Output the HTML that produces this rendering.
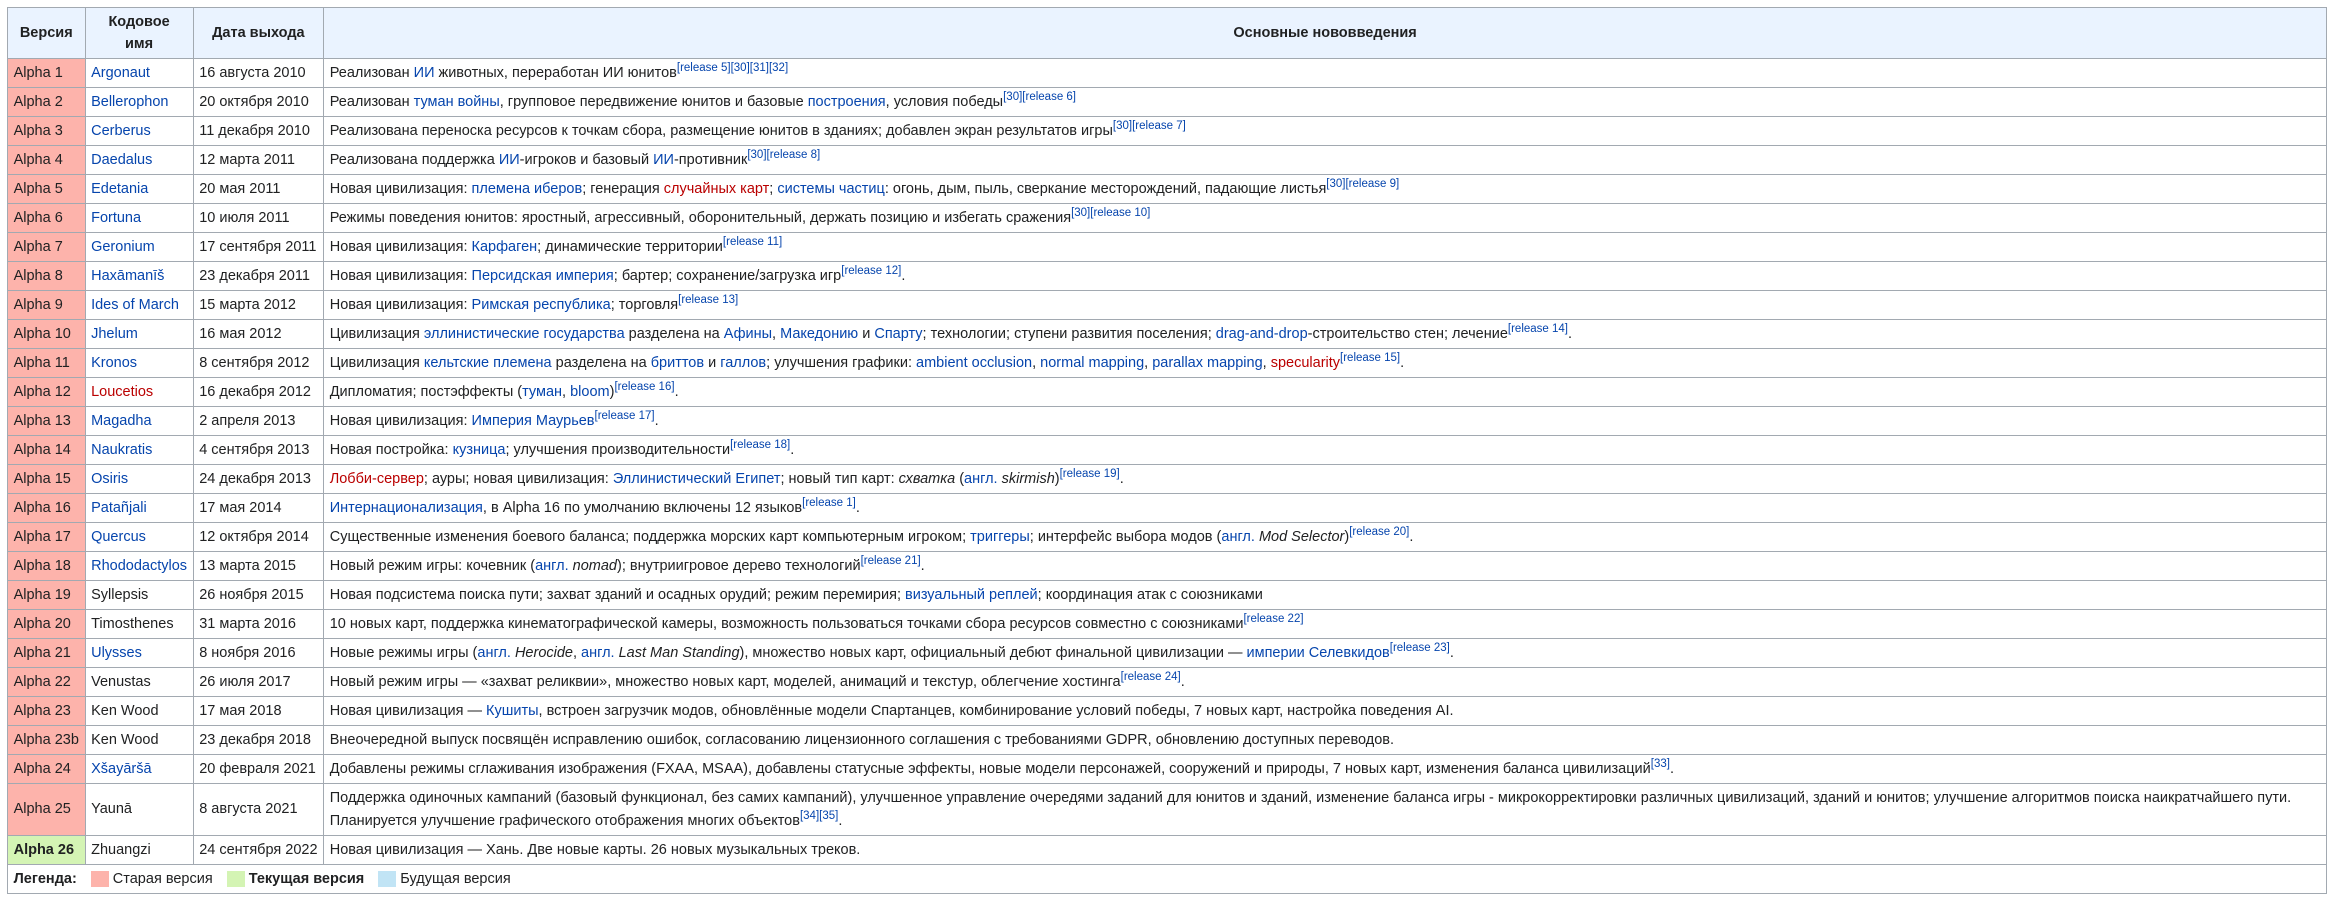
<!DOCTYPE html>
<html><head><meta charset="utf-8"><style>
body{margin:0;background:#fff;font-family:"Liberation Sans",Arial,sans-serif;font-size:14.5px;color:#202122}
table{position:absolute;left:7px;top:7px;width:2320px;border-collapse:collapse;background:#f8f9fa}
th,td{border:1px solid #a2a9b1;padding:2.8px 5.6px;line-height:22.4px;text-align:left;vertical-align:middle;background:#fff}
td:nth-child(-n+3){white-space:nowrap}
td.lg{white-space:nowrap}
th{background:#eaf3ff;font-weight:bold;text-align:center}
td.o{background:#fdb3ab}td.c{background:#d4f4b4;font-weight:bold}
a{color:#0645ad;text-decoration:none}a.r{color:#ba0000}
sup{font-size:11.5px;line-height:1;vertical-align:super}sup a{color:#0645ad}
.lg span.b{display:inline-block;width:18px;height:16px;vertical-align:middle;margin:0 4px 0 14px}
</style></head><body>
<table>
<tr><th style="width:65px">Версия</th><th style="width:95px">Кодовое<br>имя</th><th style="width:117px">Дата выхода</th><th>Основные нововведения</th></tr>
<tr><td class="o">Alpha 1</td><td><a>Argonaut</a></td><td>16 августа 2010</td><td>Реализован <a>ИИ</a> животных, переработан ИИ юнитов<sup><a>[release 5]</a><a>[30]</a><a>[31]</a><a>[32]</a></sup></td></tr>
<tr><td class="o">Alpha 2</td><td><a>Bellerophon</a></td><td>20 октября 2010</td><td>Реализован <a>туман войны</a>, групповое передвижение юнитов и базовые <a>построения</a>, условия победы<sup><a>[30]</a><a>[release 6]</a></sup></td></tr>
<tr><td class="o">Alpha 3</td><td><a>Cerberus</a></td><td>11 декабря 2010</td><td>Реализована переноска ресурсов к точкам сбора, размещение юнитов в зданиях; добавлен экран результатов игры<sup><a>[30]</a><a>[release 7]</a></sup></td></tr>
<tr><td class="o">Alpha 4</td><td><a>Daedalus</a></td><td>12 марта 2011</td><td>Реализована поддержка <a>ИИ</a>-игроков и базовый <a>ИИ</a>-противник<sup><a>[30]</a><a>[release 8]</a></sup></td></tr>
<tr><td class="o">Alpha 5</td><td><a>Edetania</a></td><td>20 мая 2011</td><td>Новая цивилизация: <a>племена иберов</a>; генерация <a class="r">случайных карт</a>; <a>системы частиц</a>: огонь, дым, пыль, сверкание месторождений, падающие листья<sup><a>[30]</a><a>[release 9]</a></sup></td></tr>
<tr><td class="o">Alpha 6</td><td><a>Fortuna</a></td><td>10 июля 2011</td><td>Режимы поведения юнитов: яростный, агрессивный, оборонительный, держать позицию и избегать сражения<sup><a>[30]</a><a>[release 10]</a></sup></td></tr>
<tr><td class="o">Alpha 7</td><td><a>Geronium</a></td><td>17 сентября 2011</td><td>Новая цивилизация: <a>Карфаген</a>; динамические территории<sup><a>[release 11]</a></sup></td></tr>
<tr><td class="o">Alpha 8</td><td><a>Haxāmanīš</a></td><td>23 декабря 2011</td><td>Новая цивилизация: <a>Персидская империя</a>; бартер; сохранение/загрузка игр<sup><a>[release 12]</a></sup>.</td></tr>
<tr><td class="o">Alpha 9</td><td><a>Ides of March</a></td><td>15 марта 2012</td><td>Новая цивилизация: <a>Римская республика</a>; торговля<sup><a>[release 13]</a></sup></td></tr>
<tr><td class="o">Alpha 10</td><td><a>Jhelum</a></td><td>16 мая 2012</td><td>Цивилизация <a>эллинистические государства</a> разделена на <a>Афины</a>, <a>Македонию</a> и <a>Спарту</a>; технологии; ступени развития поселения; <a>drag-and-drop</a>-строительство стен; лечение<sup><a>[release 14]</a></sup>.</td></tr>
<tr><td class="o">Alpha 11</td><td><a>Kronos</a></td><td>8 сентября 2012</td><td>Цивилизация <a>кельтские племена</a> разделена на <a>бриттов</a> и <a>галлов</a>; улучшения графики: <a>ambient occlusion</a>, <a>normal mapping</a>, <a>parallax mapping</a>, <a class="r">specularity</a><sup><a>[release 15]</a></sup>.</td></tr>
<tr><td class="o">Alpha 12</td><td><a class="r">Loucetios</a></td><td>16 декабря 2012</td><td>Дипломатия; постэффекты (<a>туман</a>, <a>bloom</a>)<sup><a>[release 16]</a></sup>.</td></tr>
<tr><td class="o">Alpha 13</td><td><a>Magadha</a></td><td>2 апреля 2013</td><td>Новая цивилизация: <a>Империя Маурьев</a><sup><a>[release 17]</a></sup>.</td></tr>
<tr><td class="o">Alpha 14</td><td><a>Naukratis</a></td><td>4 сентября 2013</td><td>Новая постройка: <a>кузница</a>; улучшения производительности<sup><a>[release 18]</a></sup>.</td></tr>
<tr><td class="o">Alpha 15</td><td><a>Osiris</a></td><td>24 декабря 2013</td><td><a class="r">Лобби-сервер</a>; ауры; новая цивилизация: <a>Эллинистический Египет</a>; новый тип карт: <i>схватка</i> (<a>англ.</a> <i>skirmish</i>)<sup><a>[release 19]</a></sup>.</td></tr>
<tr><td class="o">Alpha 16</td><td><a>Patañjali</a></td><td>17 мая 2014</td><td><a>Интернационализация</a>, в Alpha 16 по умолчанию включены 12 языков<sup><a>[release 1]</a></sup>.</td></tr>
<tr><td class="o">Alpha 17</td><td><a>Quercus</a></td><td>12 октября 2014</td><td>Существенные изменения боевого баланса; поддержка морских карт компьютерным игроком; <a>триггеры</a>; интерфейс выбора модов (<a>англ.</a> <i>Mod Selector</i>)<sup><a>[release 20]</a></sup>.</td></tr>
<tr><td class="o">Alpha 18</td><td><a>Rhododactylos</a></td><td>13 марта 2015</td><td>Новый режим игры: кочевник (<a>англ.</a> <i>nomad</i>); внутриигровое дерево технологий<sup><a>[release 21]</a></sup>.</td></tr>
<tr><td class="o">Alpha 19</td><td>Syllepsis</td><td>26 ноября 2015</td><td>Новая подсистема поиска пути; захват зданий и осадных орудий; режим перемирия; <a>визуальный реплей</a>; координация атак с союзниками</td></tr>
<tr><td class="o">Alpha 20</td><td>Timosthenes</td><td>31 марта 2016</td><td>10 новых карт, поддержка кинематографической камеры, возможность пользоваться точками сбора ресурсов совместно с союзниками<sup><a>[release 22]</a></sup></td></tr>
<tr><td class="o">Alpha 21</td><td><a>Ulysses</a></td><td>8 ноября 2016</td><td>Новые режимы игры (<a>англ.</a> <i>Herocide</i>, <a>англ.</a> <i>Last Man Standing</i>), множество новых карт, официальный дебют финальной цивилизации — <a>империи Селевкидов</a><sup><a>[release 23]</a></sup>.</td></tr>
<tr><td class="o">Alpha 22</td><td>Venustas</td><td>26 июля 2017</td><td>Новый режим игры — «захват реликвии», множество новых карт, моделей, анимаций и текстур, облегчение хостинга<sup><a>[release 24]</a></sup>.</td></tr>
<tr><td class="o">Alpha 23</td><td>Ken Wood</td><td>17 мая 2018</td><td>Новая цивилизация — <a>Кушиты</a>, встроен загрузчик модов, обновлённые модели Спартанцев, комбинирование условий победы, 7 новых карт, настройка поведения AI.</td></tr>
<tr><td class="o">Alpha 23b</td><td>Ken Wood</td><td>23 декабря 2018</td><td>Внеочередной выпуск посвящён исправлению ошибок, согласованию лицензионного соглашения с требованиями GDPR, обновлению доступных переводов.</td></tr>
<tr><td class="o">Alpha 24</td><td><a>Xšayāršā</a></td><td>20 февраля 2021</td><td>Добавлены режимы сглаживания изображения (FXAA, MSAA), добавлены статусные эффекты, новые модели персонажей, сооружений и природы, 7 новых карт, изменения баланса цивилизаций<sup><a>[33]</a></sup>.</td></tr>
<tr><td class="o">Alpha 25</td><td>Yaunā</td><td>8 августа 2021</td><td>Поддержка одиночных кампаний (базовый функционал, без самих кампаний), улучшенное управление очередями заданий для юнитов и зданий, изменение баланса игры - микрокорректировки различных цивилизаций, зданий и юнитов; улучшение алгоритмов поиска наикратчайшего пути.<br>Планируется улучшение графического отображения многих объектов<sup><a>[34]</a><a>[35]</a></sup>.</td></tr>
<tr><td class="c">Alpha 26</td><td>Zhuangzi</td><td>24 сентября 2022</td><td>Новая цивилизация — Хань. Две новые карты. 26 новых музыкальных треков.</td></tr>
<tr><td colspan="4" class="lg"><b>Легенда:</b><span class="b" style="background:#fdb3ab"></span>Старая версия<span class="b" style="background:#d4f4b4"></span><b>Текущая версия</b><span class="b" style="background:#c1e4f5"></span>Будущая версия</td></tr>
</table>
</body></html>
